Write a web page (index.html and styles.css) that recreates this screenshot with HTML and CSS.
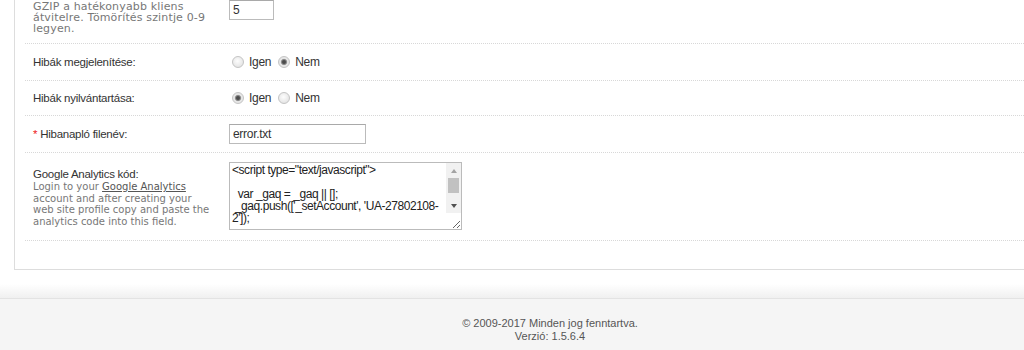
FILE: index.html
```html
<!DOCTYPE html>
<html lang="hu">
<head>
    <meta charset="UTF-8">
    <title>Beállítások</title>
    <link rel="stylesheet" href="styles.css">
</head>
<body>
    <div class="panel">
        <div class="form-row first">
            <div class="label-col">
                <span class="help big">GZIP a hatékonyabb kliens átvitelre. Tömörítés szintje 0-9 legyen.</span>
            </div>
            <div class="field-col">
                <input type="text" class="input small" value="5">
            </div>
        </div>
        <div class="form-row">
            <div class="label-col">Hibák megjelenítése:</div>
            <div class="field-col radios">
                <label><input type="radio" name="display_errors" value="1"> Igen</label>
                <label><input type="radio" name="display_errors" value="0" checked> Nem</label>
            </div>
        </div>
        <div class="form-row short">
            <div class="label-col">Hibák nyilvántartása:</div>
            <div class="field-col radios">
                <label><input type="radio" name="log_errors" value="1" checked> Igen</label>
                <label><input type="radio" name="log_errors" value="0"> Nem</label>
            </div>
        </div>
        <div class="form-row">
            <div class="label-col"><span class="required">*</span> Hibanapló filenév:</div>
            <div class="field-col">
                <input type="text" class="input" value="error.txt">
            </div>
        </div>
        <div class="form-row tall">
            <div class="label-col">
                <span class="title">Google Analytics kód:</span>
                <span class="help">Login to your <a href="#">Google Analytics</a> account and after creating your web site profile copy and paste the analytics code into this field.</span>
            </div>
            <div class="field-col">
                <div class="code-wrap">
                    <textarea class="code">&lt;script type="text/javascript"&gt;

  var _gaq = _gaq || [];
 _gaq.push(['_setAccount', 'UA-27802108-2']);

 _gaq.push(['_trackPageview']);

  (function() {
    var ga = document.createElement('script'); ga.type = 'text/javascript'; ga.async = true;
    ga.src = ('https:' == document.location.protocol ? 'https://ssl' : 'http://www') + '.google-analytics.com/ga.js';
    var s = document.getElementsByTagName('script')[0]; s.parentNode.insertBefore(ga, s);
  })();

&lt;/script&gt;</textarea>
                    <div class="scrollbar">
                        <span class="arrow up"></span>
                        <span class="track"><span class="thumb"></span></span>
                        <span class="arrow down"></span>
                    </div>
                </div>
            </div>
        </div>
    </div>

    <div class="footer-shade"></div>
    <footer>
        © 2009-2017 Minden jog fenntartva.<br>
        Verzió: 1.5.6.4
    </footer>
</body>
</html>
```

FILE: styles.css
```css
* {
    margin: 0;
    padding: 0;
    box-sizing: border-box;
}

body {
    font-family: Arial, 'Liberation Sans', sans-serif;
    font-size: 12px;
    color: #333;
    background: #fff;
    overflow: hidden;
}

.panel {
    margin: 0 -20px 0 14px;
    padding: 0 0 28px 10px;
    border-left: 1px solid #ddd;
    border-bottom: 1px solid #ddd;
    background: #fff;
}

.form-row {
    display: flex;
    align-items: flex-start;
    padding: 8px 0;
    border-bottom: 1px dotted #d8d8d8;
}

.form-row.first {
    padding: 0 0 9px;
}

.form-row.short {
    padding: 7px 0;
}

.form-row.tall {
    padding: 9px 0 10px;
}

.label-col {
    width: 204px;
    padding-left: 8px;
    font-size: 11.5px;
    line-height: 20px;
    letter-spacing: -0.25px;
    flex-shrink: 0;
}

.title {
    display: block;
    line-height: 14px;
    padding-top: 5px;
}

.help {
    display: block;
    font-family: 'DejaVu Sans', Verdana, sans-serif;
    font-size: 10px;
    line-height: 11.7px;
    letter-spacing: 0;
    color: #777;
    padding-right: 16px;
}

.help.big {
    font-size: 11px;
    line-height: 11px;
    letter-spacing: 0.15px;
    padding-top: 1px;
    padding-right: 0;
}

.help a {
    color: #555;
    text-decoration: underline;
}

.required {
    color: #e22;
}

.field-col {
    flex: 1;
}

.input {
    display: block;
    width: 137px;
    height: 20px;
    padding: 0 3px;
    border: 1px solid #bbb;
    border-top-color: #a9a9a9;
    font-family: Arial, 'Liberation Sans', sans-serif;
    font-size: 12px;
    letter-spacing: -0.3px;
    color: #333;
    background: #fff;
}

.input.small {
    width: 45px;
}

.radios {
    display: flex;
    align-items: center;
    height: 20px;
    letter-spacing: -0.3px;
}

.radios label {
    display: flex;
    align-items: center;
    margin-right: 4px;
    color: #333;
}

.radios input {
    appearance: none;
    width: 12px;
    height: 12px;
    margin: 0 5px 0 3px;
    border: 1px solid #c4c4c4;
    border-radius: 50%;
    background: radial-gradient(circle at 45% 40%, #fdfdfd 0, #e6e6e6 70%, #d6d6d6 100%);
}

.radios input:checked {
    background: radial-gradient(circle, #444 0, #555 1.6px, #9a9a9a 2.8px, #e8e8e8 3.6px, #e3e3e3 100%);
}

.code-wrap {
    position: relative;
    width: 233px;
    height: 68px;
}

.code {
    display: block;
    width: 233px;
    height: 68px;
    padding: 1px 15px 1px 2px;
    border: 1px solid #bbb;
    font-family: Arial, 'Liberation Sans', sans-serif;
    font-size: 12px;
    line-height: 12px;
    letter-spacing: -0.45px;
    color: #222;
    overflow: hidden;
    resize: both;
}

/* drawn scroll bar laid over the textarea */
.scrollbar {
    position: absolute;
    top: 1px;
    right: 1px;
    width: 15px;
    height: 50px;
    display: flex;
    flex-direction: column;
    background: #f1f1f1;
    pointer-events: none;
}

.arrow {
    height: 15px;
    display: flex;
    align-items: center;
    justify-content: center;
}

.arrow::before {
    content: "";
    border-left: 3.5px solid transparent;
    border-right: 3.5px solid transparent;
}

.arrow.up::before {
    border-bottom: 4px solid #a3a3a3;
}

.arrow.down::before {
    border-top: 4px solid #505050;
}

.track {
    flex: 1;
    padding: 0 2px;
}

.thumb {
    display: block;
    height: 15px;
    background: #c1c1c1;
}

.footer-shade {
    height: 14px;
    margin-top: 14px;
    background: linear-gradient(#fff, #f0f0f0);
}

footer {
    border-top: 1px solid #e3e3e3;
    background: #f5f5f5;
    padding: 18px 0 20px 76px;
    text-align: center;
    font-size: 11px;
    line-height: 13px;
    color: #555;
}
```
